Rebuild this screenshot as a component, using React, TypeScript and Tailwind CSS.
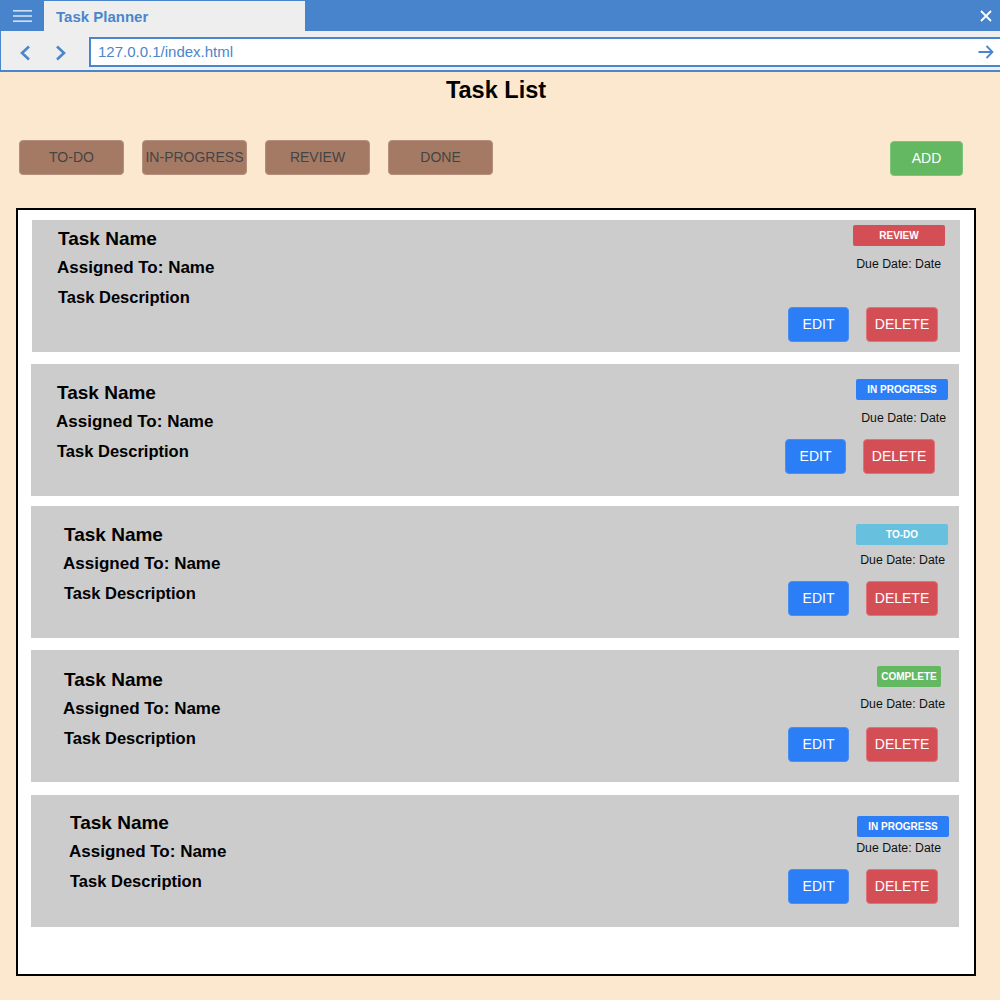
import React from "react";

type Card = {
  label: string;
  badgeBg: string;
  wrap: string;
  left: string;
  badge: string;
  due: string;
  btns: string;
};

const cards: Card[] = [
  {
    label: "REVIEW",
    badgeBg: "bg-[#d44f55]",
    wrap: "mt-[10px] ml-[14px] mr-[14px]",
    left: "pt-[8px] pl-[26px]",
    badge: "mt-[5px] mr-[15px] w-[92px]",
    due: "mt-[10px] mr-[19px]",
    btns: "mt-[35px] mr-[22px]",
  },
  {
    label: "IN PROGRESS",
    badgeBg: "bg-[#2b7ef6]",
    wrap: "mt-[12px] ml-[13px] mr-[15px]",
    left: "pt-[18px] pl-[26px]",
    badge: "mt-[15px] mr-[11px] w-[92px]",
    due: "mt-[10px] mr-[13px]",
    btns: "mt-[13px] mr-[24px]",
  },
  {
    label: "TO-DO",
    badgeBg: "bg-[#67c0de]",
    wrap: "mt-[10px] ml-[13px] mr-[15px]",
    left: "pt-[18px] pl-[33px]",
    badge: "mt-[18px] mr-[11px] w-[92px]",
    due: "mt-[7px] mr-[14px]",
    btns: "mt-[13px] mr-[21px]",
  },
  {
    label: "COMPLETE",
    badgeBg: "bg-[#64b862]",
    wrap: "mt-[12px] ml-[13px] mr-[15px]",
    left: "pt-[19px] pl-[33px]",
    badge: "mt-[16px] mr-[18px] w-[64px]",
    due: "mt-[9px] mr-[14px]",
    btns: "mt-[15px] mr-[21px]",
  },
  {
    label: "IN PROGRESS",
    badgeBg: "bg-[#2b7ef6]",
    wrap: "mt-[13px] ml-[13px] mr-[15px]",
    left: "pt-[17px] pl-[39px]",
    badge: "mt-[21px] mr-[10px] w-[92px]",
    due: "mt-[3px] mr-[18px]",
    btns: "mt-[13px] mr-[21px]",
  },
];

function TaskCard({ c }: { c: Card }) {
  return (
    <div className={`${c.wrap} h-[132px] bg-[#cccccc] flex justify-between`}>
      <div className={`${c.left} text-black font-bold`}>
        <div className="text-[19px] leading-[22px]">Task Name</div>
        <div className="mt-[8px] -ml-[1px] text-[17px] leading-[20px]">Assigned To: Name</div>
        <div className="mt-[9px] text-[16.5px] leading-[20px]">Task Description</div>
      </div>
      <div className="flex flex-col items-end">
        <div
          className={`${c.badge} ${c.badgeBg} h-[21px] rounded-[2px] flex items-center justify-center text-white font-bold text-[10px] leading-none`}
        >
          {c.label}
        </div>
        <div className={`${c.due} text-[12.3px] leading-[16px] text-[#111]`}>Due Date: Date</div>
        <div className={`${c.btns} flex gap-[17px]`}>
          <button className="w-[61px] h-[35px] rounded-[4px] bg-[#2b7ef6] border border-[#4a8ff0] text-white text-[14px]">
            EDIT
          </button>
          <button className="w-[72px] h-[35px] rounded-[4px] bg-[#d44f55] border border-[#de7479] text-white text-[14px]">
            DELETE
          </button>
        </div>
      </div>
    </div>
  );
}

export default function App() {
  const filters = ["TO-DO", "IN-PROGRESS", "REVIEW", "DONE"];
  return (
    <div
      className="w-[1000px] h-[1000px] bg-[#fce8cf] overflow-hidden"
      style={{ fontFamily: '"Liberation Sans", Arial, sans-serif' }}
    >
      {/* browser top bar */}
      <div className="h-[31px] bg-[#4884cb] flex">
        <div className="w-[44px] h-full flex items-center justify-center">
          <svg width="19" height="12" viewBox="0 0 19 12">
            <rect x="0" y="0" width="19" height="1.6" fill="#cfe0f3" />
            <rect x="0" y="5.2" width="19" height="1.6" fill="#cfe0f3" />
            <rect x="0" y="10.4" width="19" height="1.6" fill="#cfe0f3" />
          </svg>
        </div>
        <div className="mt-[1px] w-[261px] h-[30px] bg-[#eeeeee] flex items-center pl-[12px] pt-[2px]">
          <span className="text-[#4a86cb] font-bold text-[15px]">Task Planner</span>
        </div>
        <div className="flex-1" />
        <div className="w-[26px] h-full flex items-center justify-center pr-[2px]">
          <svg width="12" height="12" viewBox="0 0 12 12">
            <path d="M1 1 L11 11 M11 1 L1 11" stroke="#ffffff" strokeWidth="1.8" />
          </svg>
        </div>
      </div>
      {/* address row */}
      <div className="h-[41px] bg-[#eeeeee] border-b-2 border-l border-[#4a86cb] flex">
        <div className="w-[88px] flex items-start pt-[14px]">
          <svg className="ml-[18px]" width="12" height="16" viewBox="0 0 12 16">
            <path d="M10 1.5 L3 8 L10 14.5" stroke="#4a86cb" strokeWidth="2.6" fill="none" />
          </svg>
          <svg className="ml-[24px]" width="12" height="16" viewBox="0 0 12 16">
            <path d="M2 1.5 L9 8 L2 14.5" stroke="#4a86cb" strokeWidth="2.6" fill="none" />
          </svg>
        </div>
        <div className="mt-[6px] h-[30px] flex-1 -mr-[4px] bg-white border-2 border-[#4a86cb] flex items-center justify-between pl-[7px] pr-[8px]">
          <span className="text-[#4a86cb] text-[15px]">127.0.0.1/index.html</span>
          <svg width="16" height="14" viewBox="0 0 16 14">
            <path d="M0.5 7 H14.5 M8.5 1 L14.5 7 L8.5 13" stroke="#4a86cb" strokeWidth="1.8" fill="none" />
          </svg>
        </div>
      </div>

      {/* title */}
      <div className="mt-[5px] pr-[8px] text-center font-bold text-[23.5px] leading-[26px] text-black">Task List</div>

      {/* filter row */}
      <div className="mt-[37px] flex items-start pl-[19px] pr-[37px]">
        <div className="flex gap-[18px]">
          {filters.map((f) => (
            <button
              key={f}
              className="w-[105px] h-[35px] rounded-[4px] bg-[#a57a64] border border-[#b48f7b] text-[#444] text-[14px] whitespace-nowrap flex items-center justify-center"
            >
              {f}
            </button>
          ))}
        </div>
        <div className="flex-1" />
        <button className="mt-[1px] w-[73px] h-[35px] rounded-[4px] bg-[#64b862] border border-[#7cc57a] text-white text-[14px]">
          ADD
        </button>
      </div>

      {/* list container */}
      <div className="mt-[32px] ml-[16px] w-[960px] h-[768px] bg-white border-2 border-black flex flex-col">
        {cards.map((c, i) => (
          <TaskCard key={i} c={c} />
        ))}
      </div>
    </div>
  );
}
